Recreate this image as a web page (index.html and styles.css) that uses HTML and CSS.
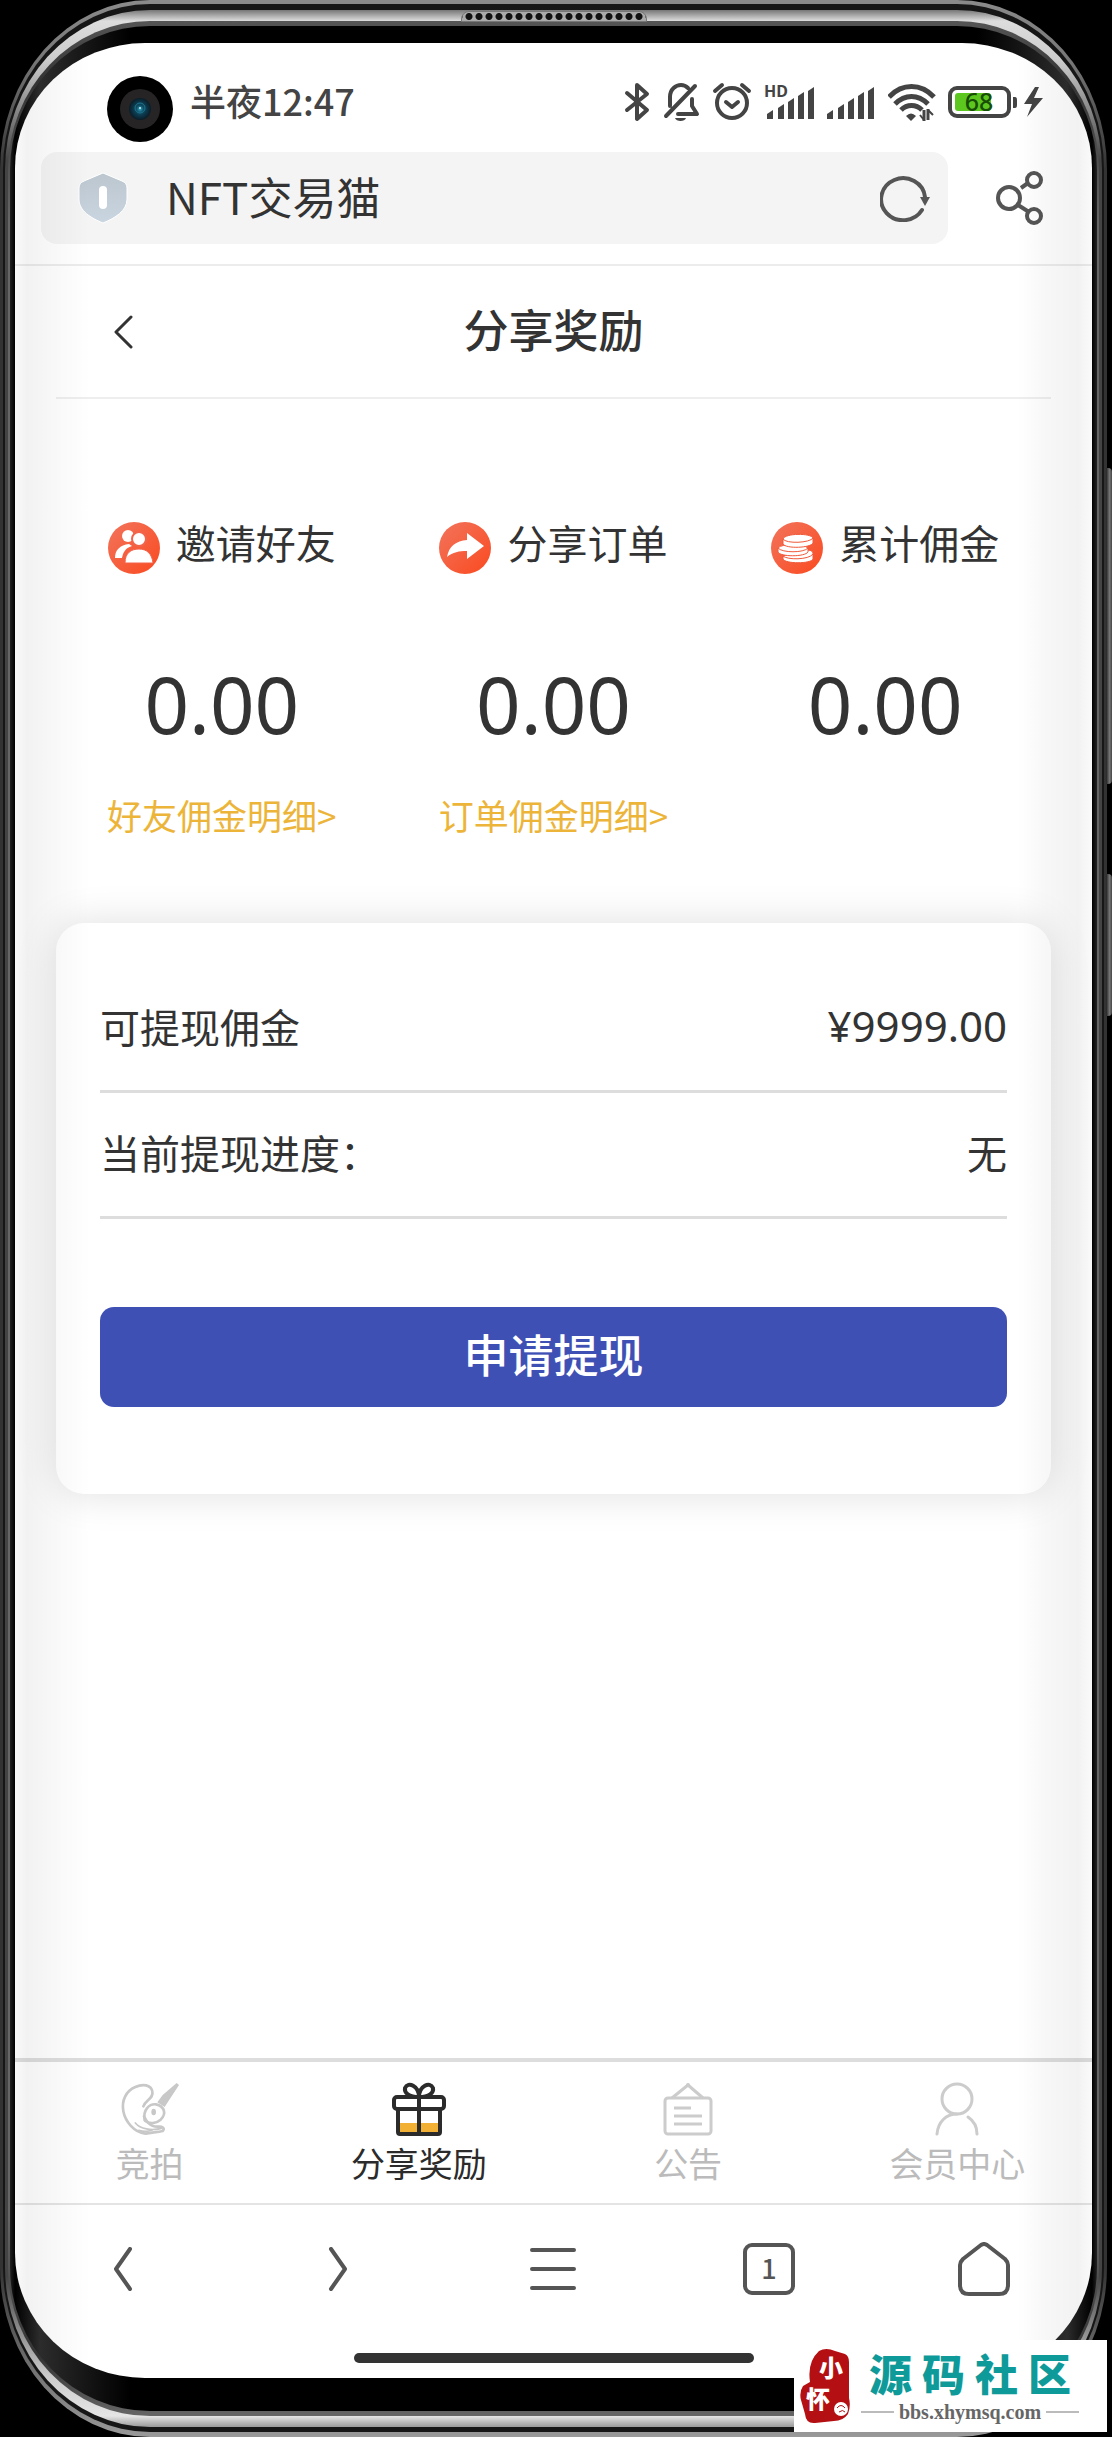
FILE: index.html
```html
<!DOCTYPE html>
<html lang="zh-CN">
<head>
<meta charset="utf-8">
<meta name="viewport" content="width=device-width, initial-scale=1">
<title>分享奖励</title>
<link rel="stylesheet" href="styles.css">
</head>
<body>
<div class="stage">
<span class="side-key key-volume"></span>
<span class="side-key key-power"></span>
<div class="rim rim-edge"><div class="rim rim-groove"><div class="rim rim-steel"><div class="rim rim-lip"><div class="rim bezel">
<div class="screen">

  <header class="status">
    <span class="camera">
      <svg viewBox="0 0 66 66" width="66" height="66" aria-hidden="true">
        <defs><radialGradient id="lens"><stop offset="0" stop-color="#35a3bd"/><stop offset=".35" stop-color="#0d4a61"/><stop offset="1" stop-color="#0a1c28"/></radialGradient></defs>
        <circle cx="33" cy="33" r="33" fill="#000"/><circle cx="33" cy="33" r="20" fill="#262424"/>
        <circle cx="33" cy="33" r="11" fill="url(#lens)"/><circle cx="33" cy="32" r="5" fill="none" stroke="#1f7690"/><circle cx="33" cy="32" r="1" fill="#cfeef5"/>
      </svg>
    </span>
    <time class="clock">半夜12:47</time>
    <div class="status-icons">
      <svg width="26" height="40" viewBox="0 0 26 40" fill="none" stroke="#444" stroke-width="4" stroke-linejoin="round" stroke-linecap="round"><path d="M3 11l20 17-10 9V3l10 9L3 28"/></svg>
      <svg width="38" height="40" viewBox="0 0 38 40" fill="none" stroke="#444" stroke-width="4" stroke-linecap="round" stroke-linejoin="round"><path d="M4 34L33 4M8 24V15C8 7 14 3 19 3c3 0 5 1 7 3M30 17v7l5 8H16"/><path d="M13 36h11c-1 4-10 4-11 0z" fill="#444" stroke="none"/></svg>
      <svg width="40" height="40" viewBox="0 0 40 40" fill="none" stroke="#444" stroke-width="4" stroke-linecap="round" stroke-linejoin="round"><circle cx="20" cy="21" r="15"/><path d="M14 20l6 5 6-5M3 9l7-6M37 9l-7-6"/></svg>
      <svg class="signal" width="50" height="40" viewBox="0 0 50 40" fill="#444"><text x="0" y="15" class="hd">HD</text><path d="M3 37v-5l6-4v9zM14 37V26l6-4v15zM24 37V20l6-4v21zM34 37V14l6-4v27zM44 37V9l6-4v32z"/></svg>
      <svg width="50" height="40" viewBox="0 0 50 40" fill="#444"><path d="M1 37v-5l6-4v9zM12 37V26l6-4v15zM22 37V20l6-4v21zM32 37V14l6-4v27zM42 37V9l6-4v32z"/></svg>
      <svg width="48" height="40" viewBox="0 0 48 40" fill="none" stroke="#444" stroke-width="5"><path d="M1 15C14 1 33 1 46 15M7 22C17 12 30 12 40 22M13 28c6-6 15-6 21 0"/><path d="M18 34q5-5 10 0l-5 5z" fill="#444" stroke="none"/><path d="M36 28v11M40 27v11" stroke-width="3"/><path d="M32 33l4 5M40 28l5 5" stroke-width="2"/></svg>
      <svg width="95" height="40" viewBox="0 0 95 40"><rect x="2" y="6" width="59" height="28" rx="7" fill="#fff" stroke="#444" stroke-width="4"/><rect x="7" y="11" width="36" height="18" rx="3" fill="#5cc81f"/><text x="31" y="29" text-anchor="middle" class="charge">68</text><path d="M65 15h2q2 0 2 3v5q0 3-2 3h-2z" fill="#444"/><path d="M87 5L76 22h8l-5 13 16-19h-9l5-11z" fill="#444"/></svg>
    </div>
  </header>

  <div class="address-row">
    <div class="address">
      <svg width="50" height="52" viewBox="0 0 50 52" aria-hidden="true"><defs><linearGradient id="sh" x2="0" y2="1"><stop stop-color="#bcc6cf"/><stop offset="1" stop-color="#c9d5e0"/></linearGradient></defs><path d="M25 1L44 9q5 2 5 7v11c0 12-12 19-24 24C13 46 1 39 1 27V16q0-5 5-7z" fill="url(#sh)" stroke="#fff" stroke-width="1"/><rect x="21" y="14" width="8" height="23" rx="4" fill="#fff"/></svg>
      <span class="site">NFT交易猫</span>
      <button class="icon-button" type="button" aria-label="刷新"><svg width="50" height="48" viewBox="0 0 50 48" fill="none" stroke="#555" stroke-width="4"><path d="M42 36A22 21 0 1 1 45 23" stroke-linecap="round"/><path d="M40 23h10l-5 9z" fill="#555" stroke="none"/></svg></button>
    </div>
    <button class="icon-button" type="button" aria-label="分享"><svg width="48" height="54" viewBox="0 0 48 54" fill="none" stroke="#555" stroke-width="4"><circle cx="13" cy="27" r="11"/><circle cx="38" cy="9" r="7"/><circle cx="38" cy="45" r="7"/><path d="M25 17l7-5M22 34l11 7"/></svg></button>
  </div>

  <main class="page">
    <div class="title-bar">
      <button class="icon-button back" type="button" aria-label="返回"><svg width="20" height="34" viewBox="0 0 20 34" fill="none" stroke="#333" stroke-width="3" stroke-linecap="round" stroke-linejoin="round"><path d="M17 2L2 17l15 15"/></svg></button>
      <h1>分享奖励</h1>
    </div>

    <section class="stats">
      <div class="stat">
        <h2><svg width="52" height="52" viewBox="0 0 52 52" aria-hidden="true"><defs><linearGradient id="or" x2="1" y2="1"><stop stop-color="#f2745c"/><stop offset="1" stop-color="#fa4a20"/></linearGradient></defs><circle cx="26" cy="26" r="26" fill="url(#or)"/><g fill="#fff"><circle cx="20" cy="14" r="6"/><path d="M7 36c0-8 5-13 14-14l3 2c-7 2-9 7-10 12z"/><circle cx="31" cy="17" r="7" stroke="#f2644a" stroke-width="2"/><path d="M17 41c0-10 6-14 14-14s13 5 14 14z" stroke="#f2644a" stroke-width="1"/></g></svg>邀请好友</h2>
        <p class="figure">0.00</p>
        <a href="#friends">好友佣金明细&gt;</a>
      </div>
      <div class="stat">
        <h2><svg width="52" height="52" viewBox="0 0 52 52" aria-hidden="true"><circle cx="26" cy="26" r="26" fill="url(#or)"/><path d="M8 35C10 24 17 19 28 18v-7l17 13-17 13v-8c-8 0-14 1-20 6z" fill="#fff"/></svg>分享订单</h2>
        <p class="figure">0.00</p>
        <a href="#orders">订单佣金明细&gt;</a>
      </div>
      <div class="stat">
        <h2><svg width="52" height="52" viewBox="0 0 52 52" aria-hidden="true"><circle cx="26" cy="26" r="26" fill="url(#or)"/><g fill="#fff" stroke="#f0583a" stroke-width="1"><path d="M12 34v3c2 5 28 5 30 0v-6c-1-3-4-3-8-3z"/><path d="M12 34c4 4 26 4 30-2" fill="none"/><path d="M7 26v4c2 5 27 5 30 0v-4c-4-4-26-5-30 0z"/><path d="M7 26c4 5 26 5 30 0" fill="none"/><path d="M12 17v5c3 5 28 4 30-1v-5c-2-5-28-5-30 1z"/><path d="M12 17c3 5 27 4 30-1" fill="none"/></g></svg>累计佣金</h2>
        <p class="figure">0.00</p>
      </div>
    </section>

    <section class="card">
      <dl>
        <div class="row"><dt>可提现佣金</dt><dd class="amount">¥9999.00</dd></div>
        <div class="row"><dt>当前提现进度：</dt><dd>无</dd></div>
      </dl>
      <button class="submit" type="button">申请提现</button>
    </section>
  </main>

  <nav class="tabs">
    <a href="#auction"><svg width="60" height="54" viewBox="24 18 180 160" fill="none" stroke="#c8c8c8" stroke-width="8" stroke-linecap="round" stroke-linejoin="round"><path d="M94 90C100 72 126 66 121 45C117 25 92 22 70 32C42 44 28 72 34 105C40 136 66 168 100 172C118 168 136 168 152 164C160 156 152 150 138 151C112 152 102 132 96 120"/><path d="M70 140C85 158 118 164 148 156M80 162C95 166 108 166 120 162" stroke-width="5"/><path d="M98 132C92 100 112 82 132 84C158 90 164 112 146 130C132 142 112 144 100 134z"/><path d="M136 78L152 56L194 20L201 26L172 70L158 92z" fill="#c8c8c8" stroke="none"/><ellipse cx="125" cy="107" rx="7" ry="10" fill="#c8c8c8" stroke="none"/></svg><span>竞拍</span></a>
    <a href="#share" class="active" aria-current="page"><svg width="56" height="54" viewBox="0 0 56 54" fill="none" stroke="#2b2b2b" stroke-width="4" stroke-linejoin="round"><path d="M9 41h38v11H9z" fill="#f2b134" stroke="none"/><rect x="3" y="15" width="50" height="12" rx="3"/><path d="M7 27v23q0 2 2 2h38q2 0 2-2V27M28 15v37M28 15C18 15 13 11 14 6c3-7 14-2 14 9C28 4 39-1 42 6c1 5-4 9-14 9z"/></svg><span>分享奖励</span></a>
    <a href="#notice"><svg width="50" height="54" viewBox="0 0 50 54" fill="none" stroke="#ccc" stroke-width="3"><rect x="2" y="16" width="46" height="36" rx="3"/><path d="M9 16L25 3l15 13M11 26h17M11 34h28M11 42h28"/><circle cx="25" cy="3" r="2" fill="#ccc" stroke="none"/></svg><span>公告</span></a>
    <a href="#member"><svg width="44" height="54" viewBox="0 0 44 54" fill="none" stroke="#ccc" stroke-width="3" stroke-linecap="round"><circle cx="22" cy="17" r="15"/><path d="M2 52C3 40 11 32 22 32M33 35c6 4 9 10 9 17"/></svg><span>会员中心</span></a>
  </nav>

  <nav class="browser-nav">
    <button class="icon-button" type="button" aria-label="后退"><svg width="20" height="44" viewBox="0 0 20 44" fill="none" stroke="#555" stroke-width="4" stroke-linecap="round" stroke-linejoin="round"><path d="M17 2L3 22l14 20"/></svg></button>
    <button class="icon-button" type="button" aria-label="前进"><svg width="20" height="44" viewBox="0 0 20 44" fill="none" stroke="#555" stroke-width="4" stroke-linecap="round" stroke-linejoin="round"><path d="M3 2l14 20L3 42"/></svg></button>
    <button class="icon-button" type="button" aria-label="菜单"><svg width="46" height="44" viewBox="0 0 46 44" stroke="#555" stroke-width="4" stroke-linecap="round"><path d="M2 3h42M2 22h42M2 41h42"/></svg></button>
    <button class="icon-button" type="button"><span class="windows">1</span></button>
    <button class="icon-button" type="button" aria-label="主页"><svg width="52" height="54" viewBox="0 0 52 54" fill="none" stroke="#555" stroke-width="4" stroke-linejoin="round"><path d="M23 3q3-2 6 0l18 14q3 3 3 6v20q0 9-9 9H11q-9 0-9-9V23q0-3 3-6z"/></svg></button>
  </nav>
  <div class="gesture"></div>
</div>
</div></div></div></div></div>
<span class="grille"></span>
<aside class="mark">
  <svg width="52" height="76" viewBox="0 0 52 76" aria-hidden="true"><path d="M20 3Q27-1 36 3L46 6Q50 8 50 14V50Q52 58 49 66Q44 73 35 73L16 75Q7 76 6 66L2 52Q0 44 4 38L11 34Q8 14 20 3z" fill="#b40f12"/><g fill="#fff" class="seal"><text x="20" y="29">小</text><text x="7" y="60">怀</text></g><circle cx="42" cy="61" r="7" fill="#fff"/><path d="M38 60q4-5 8 0m-6 4q4-3 6 0" stroke="#b40f12" fill="none"/></svg>
  <div class="mark-text">
    <strong><span>源</span><span>码</span><span>社</span><span>区</span></strong>
    <span class="mark-url">bbs.xhymsq.com</span>
  </div>
</aside>
</div>
</body>
</html>
```
FILE: styles.css
```css
* { box-sizing: border-box; margin: 0; padding: 0; }
body { background: #000; color: #333; font-family: "Noto Sans CJK SC", "Noto Sans", sans-serif; }
a { color: inherit; text-decoration: none; }
svg { display: block; flex: none; }
.icon-button { background: none; border: 0; color: inherit; font: inherit; display: flex; align-items: center; justify-content: center; }

/* phone shell */
.stage { position: relative; min-height: 100vh; display: flex; flex-direction: column; padding-right: 5px; }
.rim { flex: 1; display: flex; flex-direction: column; }
.rim-edge { background: linear-gradient(#8a8a8a, #777 60px, #333 170px, #333 calc(100% - 170px), #777 calc(100% - 60px), #999); border-radius: 150px / 170px; padding: 4px 3px 5px; }
.rim-groove { background: #161616; border-radius: 147px / 166px; padding: 6px 2px 5px; }
.rim-steel { background: linear-gradient(#777, #ddd 11px, #ccc 50px, #444 150px, #444 calc(100% - 150px), #ccc calc(100% - 50px), #e5e5e5 calc(100% - 11px), #999); border-radius: 145px / 160px; padding: 11px 3px; }
.rim-lip { background: linear-gradient(#555, #333 60px, #666 200px, #666 calc(100% - 200px), #333 calc(100% - 60px), #666); border-radius: 142px / 149px; padding: 5px 2px; }
.bezel { background: linear-gradient(90deg, #222, #000 5px, #2c2c2c 30px, #000 120px, #000 calc(100% - 120px), #2c2c2c calc(100% - 30px), #000 calc(100% - 5px), #222); border-radius: 140px / 144px; padding: 17px 5px 33px; }
.screen { position: relative; flex: 1; display: flex; flex-direction: column; background: #fff; border-radius: 130px / 125px; overflow: hidden; }
.screen::after { content: ""; position: absolute; inset: 0; pointer-events: none; background: linear-gradient(90deg, rgba(0,0,0,.02), rgba(0,0,0,.05) 12px, rgba(0,0,0,.03) 35px, transparent 75px, transparent calc(100% - 75px), rgba(0,0,0,.03) calc(100% - 45px), rgba(0,0,0,.05) calc(100% - 14px), rgba(0,0,0,.02)); }
.side-key { position: absolute; right: 0; width: 6px; background: linear-gradient(90deg, #222, #777 60%, #444); border-radius: 0 4px 4px 0; }
.key-volume { top: 468px; height: 316px; }
.key-power { top: 874px; height: 142px; }
.grille { position: absolute; top: 11px; left: 50%; width: 186px; height: 11px; margin-left: -95px; border: 1px solid #777; border-radius: 8px 8px 0 0; background: radial-gradient(circle, #111 3px, transparent 4px) 2px 0 / 10px 9px repeat-x, #aaa; }

/* status bar */
.status { display: flex; align-items: flex-start; padding: 33px 49px 0 92px; height: 109px; color: #444; }
.clock { margin-left: 17px; font-size: 36px; font-weight: 500; line-height: 48px; }
.status-icons { margin-left: auto; height: 52px; display: flex; align-items: center; gap: 12px; }
.signal { overflow: visible; }
.hd { font: 700 16px "Noto Sans", sans-serif; }
.charge { font: 500 25px "Noto Sans", sans-serif; fill: #174d05; }

/* browser address bar */
.address-row { display: flex; align-items: center; gap: 48px; padding: 0 48px 20px 26px; border-bottom: 2px solid #ececec; }
.address { flex: 1; height: 92px; display: flex; align-items: center; padding: 0 18px 0 37px; background: #f4f4f4; border-radius: 16px; }
.site { flex: 1; margin-left: 38px; padding-bottom: 4px; font-size: 44px; line-height: 60px; }

/* page */
.page { flex: 1; padding: 0 41px; }
.title-bar { display: grid; grid-template-columns: 1fr auto 1fr; align-items: center; height: 133px; border-bottom: 2px solid #eee; }
.title-bar h1 { font-size: 45px; font-weight: 500; line-height: 60px; padding-bottom: 6px; }
.back { justify-self: start; padding-left: 58px; }
.stats { display: grid; grid-template-columns: repeat(3, 1fr); padding: 123px 0 87px; }
.stat { display: flex; flex-direction: column; align-items: center; }
.stat h2 { display: flex; gap: 16px; height: 52px; font-size: 40px; font-weight: 400; line-height: 40px; }
.figure { margin-top: 90px; font-family: "Noto Sans", sans-serif; font-size: 78px; line-height: 80px; }
.stat a { margin-top: 52px; font-size: 35px; line-height: 38px; height: 40px; color: #ecb53a; }

.card { padding: 44px 44px 87px; background: #fff; border-radius: 28px; box-shadow: 0 0 40px rgba(0,0,0,.13); }
.row { display: flex; align-items: center; justify-content: space-between; height: 126px; padding-bottom: 6px; border-bottom: 3px solid #ddd; font-size: 40px; line-height: 60px; }
.amount { font-family: "Noto Sans", sans-serif; font-size: 42px; }
.submit { display: block; width: 100%; height: 100px; margin-top: 88px; padding-bottom: 8px; border: 0; border-radius: 14px; background: #3f50b5; color: #fff; font: 500 45px "Noto Sans CJK SC", sans-serif; }

/* app tabs */
.tabs { display: grid; grid-template-columns: repeat(4, 1fr); padding: 20px 0 22px; border-top: 4px solid #ddd; border-bottom: 2px solid #e4e4e4; color: #bbb; }
.tabs a { display: flex; flex-direction: column; align-items: center; gap: 9px; font-size: 34px; line-height: 36px; }
.tabs .active { color: #2b2b2b; }

/* browser toolbar */
.browser-nav { display: grid; grid-template-columns: repeat(5, 1fr); align-items: center; height: 128px; }
.windows { width: 52px; height: 52px; border: 4px solid #555; border-radius: 9px; color: #555; font-size: 27px; font-weight: 500; line-height: 42px; }
.gesture { width: 400px; height: 10px; margin: 20px auto 15px; border-radius: 5px; background: #333; }

/* site badge */
.mark { position: absolute; right: 5px; bottom: 5px; width: 313px; height: 92px; display: flex; align-items: center; gap: 10px; padding-left: 5px; background: #fff; }
.seal { font: 900 24px "Noto Sans CJK SC", sans-serif; }
.mark-text { width: 218px; display: flex; flex-direction: column; align-items: center; }
.mark-text strong { display: flex; gap: 10px; font-size: 43px; font-weight: 900; line-height: 52px; color: #0f9a9a; }
.mark-url { display: flex; align-items: center; gap: 5px; align-self: stretch; color: #666; font: 700 20px/28px "Liberation Serif", serif; }
.mark-url::before, .mark-url::after { content: ""; flex: 1; height: 2px; background: #bbb; }
```
